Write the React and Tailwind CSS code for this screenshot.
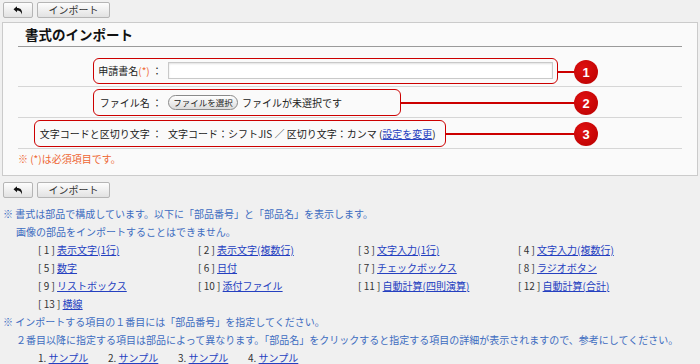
import React from "react";

function BackIcon() {
  return (
    <svg width="10" height="9" viewBox="0 0 10 9">
      <path d="M0.5 3.2 L4 0.3 L4 2 C7.5 2 9.5 4 9 8.5 C8.2 6 6.8 4.6 4 4.6 L4 6.2 Z" fill="#111" />
    </svg>
  );
}

function Toolbar() {
  return (
    <div className="flex gap-[4px] pl-[3px] h-[16px]">
      <button className="w-[30px] h-[16px] flex items-center justify-center rounded-[2px] border border-[#b5b5b5] bg-gradient-to-b from-[#fdfdfd] to-[#e2e2e2]">
        <BackIcon />
      </button>
      <button className="w-[73px] h-[16px] flex items-center justify-center rounded-[2px] border border-[#b5b5b5] bg-gradient-to-b from-[#fdfdfd] to-[#e2e2e2] text-[10px] text-[#333] leading-none">
        インポート
      </button>
    </div>
  );
}

function Row({ label, children, h, last }) {
  return (
    <div className={`flex items-center border-b border-[#d6d6d6] ${h}`}>
      <div className="w-[144px] shrink-0 text-right whitespace-nowrap text-[10px] text-[#222]">{label}</div>
      <div className="ml-[6px] flex items-center text-[10px] text-[#222] whitespace-nowrap">{children}</div>
    </div>
  );
}

const items = [
  ["1", "表示文字(1行)"],
  ["2", "表示文字(複数行)"],
  ["3", "文字入力(1行)"],
  ["4", "文字入力(複数行)"],
  ["5", "数字"],
  ["6", "日付"],
  ["7", "チェックボックス"],
  ["8", "ラジオボタン"],
  ["9", "リストボックス"],
  ["10", "添付ファイル"],
  ["11", "自動計算(四則演算)"],
  ["12", "自動計算(合計)"],
  ["13", "横線"],
];

function Link({ children }) {
  return <span className="text-[#2540c0] underline underline-offset-[1px]">{children}</span>;
}

export default function App() {
  return (
    <div className="w-[700px] h-[364px] overflow-hidden bg-[#f0f0f0] font-['Noto_Sans_CJK_JP','Noto_Sans',sans-serif] pt-[2px]">
      <Toolbar />
      <div className="relative mt-[4px] ml-[2px] w-[696px] h-[154px] border border-[#cbcbcb] bg-[#fafafa] px-[15px]">
        <div className="h-[24px] border-b border-[#9a9a9a] pl-[7px] flex items-center">
          <span className="text-[13.5px] font-bold text-[#111] leading-none">書式のインポート</span>
        </div>
        <div className="mt-[8px]">
          <Row label={<>申請書名<span className="text-[#ee6633]">(*)</span> ：</>} h="h-[32px]">
            <div className="w-[385px] h-[17px] border border-[#c9c9c9] bg-white shadow-[inset_0_1px_2px_rgba(0,0,0,0.12)]" />
          </Row>
          <Row label="ファイル名 ：" h="h-[31px]">
            <span className="h-[15px] w-[70px] flex items-center justify-center rounded-full border border-[#8a8a8a] bg-gradient-to-b from-white to-[#dcdcdc] text-[8.5px] text-[#222] leading-none">ファイルを選択</span>
            <span className="ml-[4px]">ファイルが未選択です</span>
          </Row>
          <Row label="文字コードと区切り文字 ：" h="h-[31px]">
            文字コード：シフトJIS ／ 区切り文字：カンマ (<Link>設定を変更</Link>)
          </Row>
        </div>
        <div className="h-[19px] flex items-center text-[10px] text-[#ee6633]">※ (*)は必須項目です。</div>

        {/* annotations */}
        <div className="absolute left-[90px] top-[35px] w-[465px] h-[26px] border-[1.5px] border-[#cc0000] rounded-[6px]" />
        <div className="absolute left-[90px] top-[66px] w-[308px] h-[27px] border-[1.5px] border-[#cc0000] rounded-[6px]" />
        <div className="absolute left-[31px] top-[97px] w-[412px] h-[27px] border-[1.5px] border-[#cc0000] rounded-[6px]" />
        <div className="absolute left-[555px] top-[48px] w-[17px] h-[1.5px] bg-[#cc0000]" />
        <div className="absolute left-[398px] top-[79px] w-[174px] h-[1.5px] bg-[#cc0000]" />
        <div className="absolute left-[443px] top-[110px] w-[129px] h-[1.5px] bg-[#cc0000]" />
        {[37, 68, 99].map((t, i) => (
          <div
            key={i}
            className="absolute left-[571px] w-[24px] h-[24px] rounded-full bg-[radial-gradient(circle_at_40%_35%,#e01010,#b80000)] flex items-center justify-center text-white font-bold text-[13px] leading-none font-['Liberation_Sans',sans-serif]"
            style={{ top: t }}
          >
            {i + 1}
          </div>
        ))}
      </div>
      <div className="mt-[6px]">
        <Toolbar />
      </div>
      <div className="mt-[7px] text-[10px] text-[#3d6cc0] leading-[18px]">
        <div className="pl-[3px] whitespace-nowrap">※ 書式は部品で構成しています。以下に「部品番号」と「部品名」を表示します。</div>
        <div className="pl-[16px] whitespace-nowrap">画像の部品をインポートすることはできません。</div>
        <div className="pl-[38px] grid grid-cols-[160px_160px_160px_160px]">
          {items.map(([n, t]) => (
            <div key={n} className="whitespace-nowrap">
              <span className="text-[#333]">[ {n} ] </span>
              <Link>{t}</Link>
            </div>
          ))}
        </div>
        <div className="pl-[3px] whitespace-nowrap">※ インポートする項目の１番目には「部品番号」を指定してください。</div>
        <div className="pl-[16px] whitespace-nowrap">２番目以降に指定する項目は部品によって異なります。「部品名」をクリックすると指定する項目の詳細が表示されますので、参考にしてください。</div>
        <div className="pl-[38px] flex">
          {[1, 2, 3, 4].map((n) => (
            <div key={n} className="w-[70px] whitespace-nowrap">
              <span className="text-[#333]">{n}. </span>
              <Link>サンプル</Link>
            </div>
          ))}
        </div>
      </div>
    </div>
  );
}
